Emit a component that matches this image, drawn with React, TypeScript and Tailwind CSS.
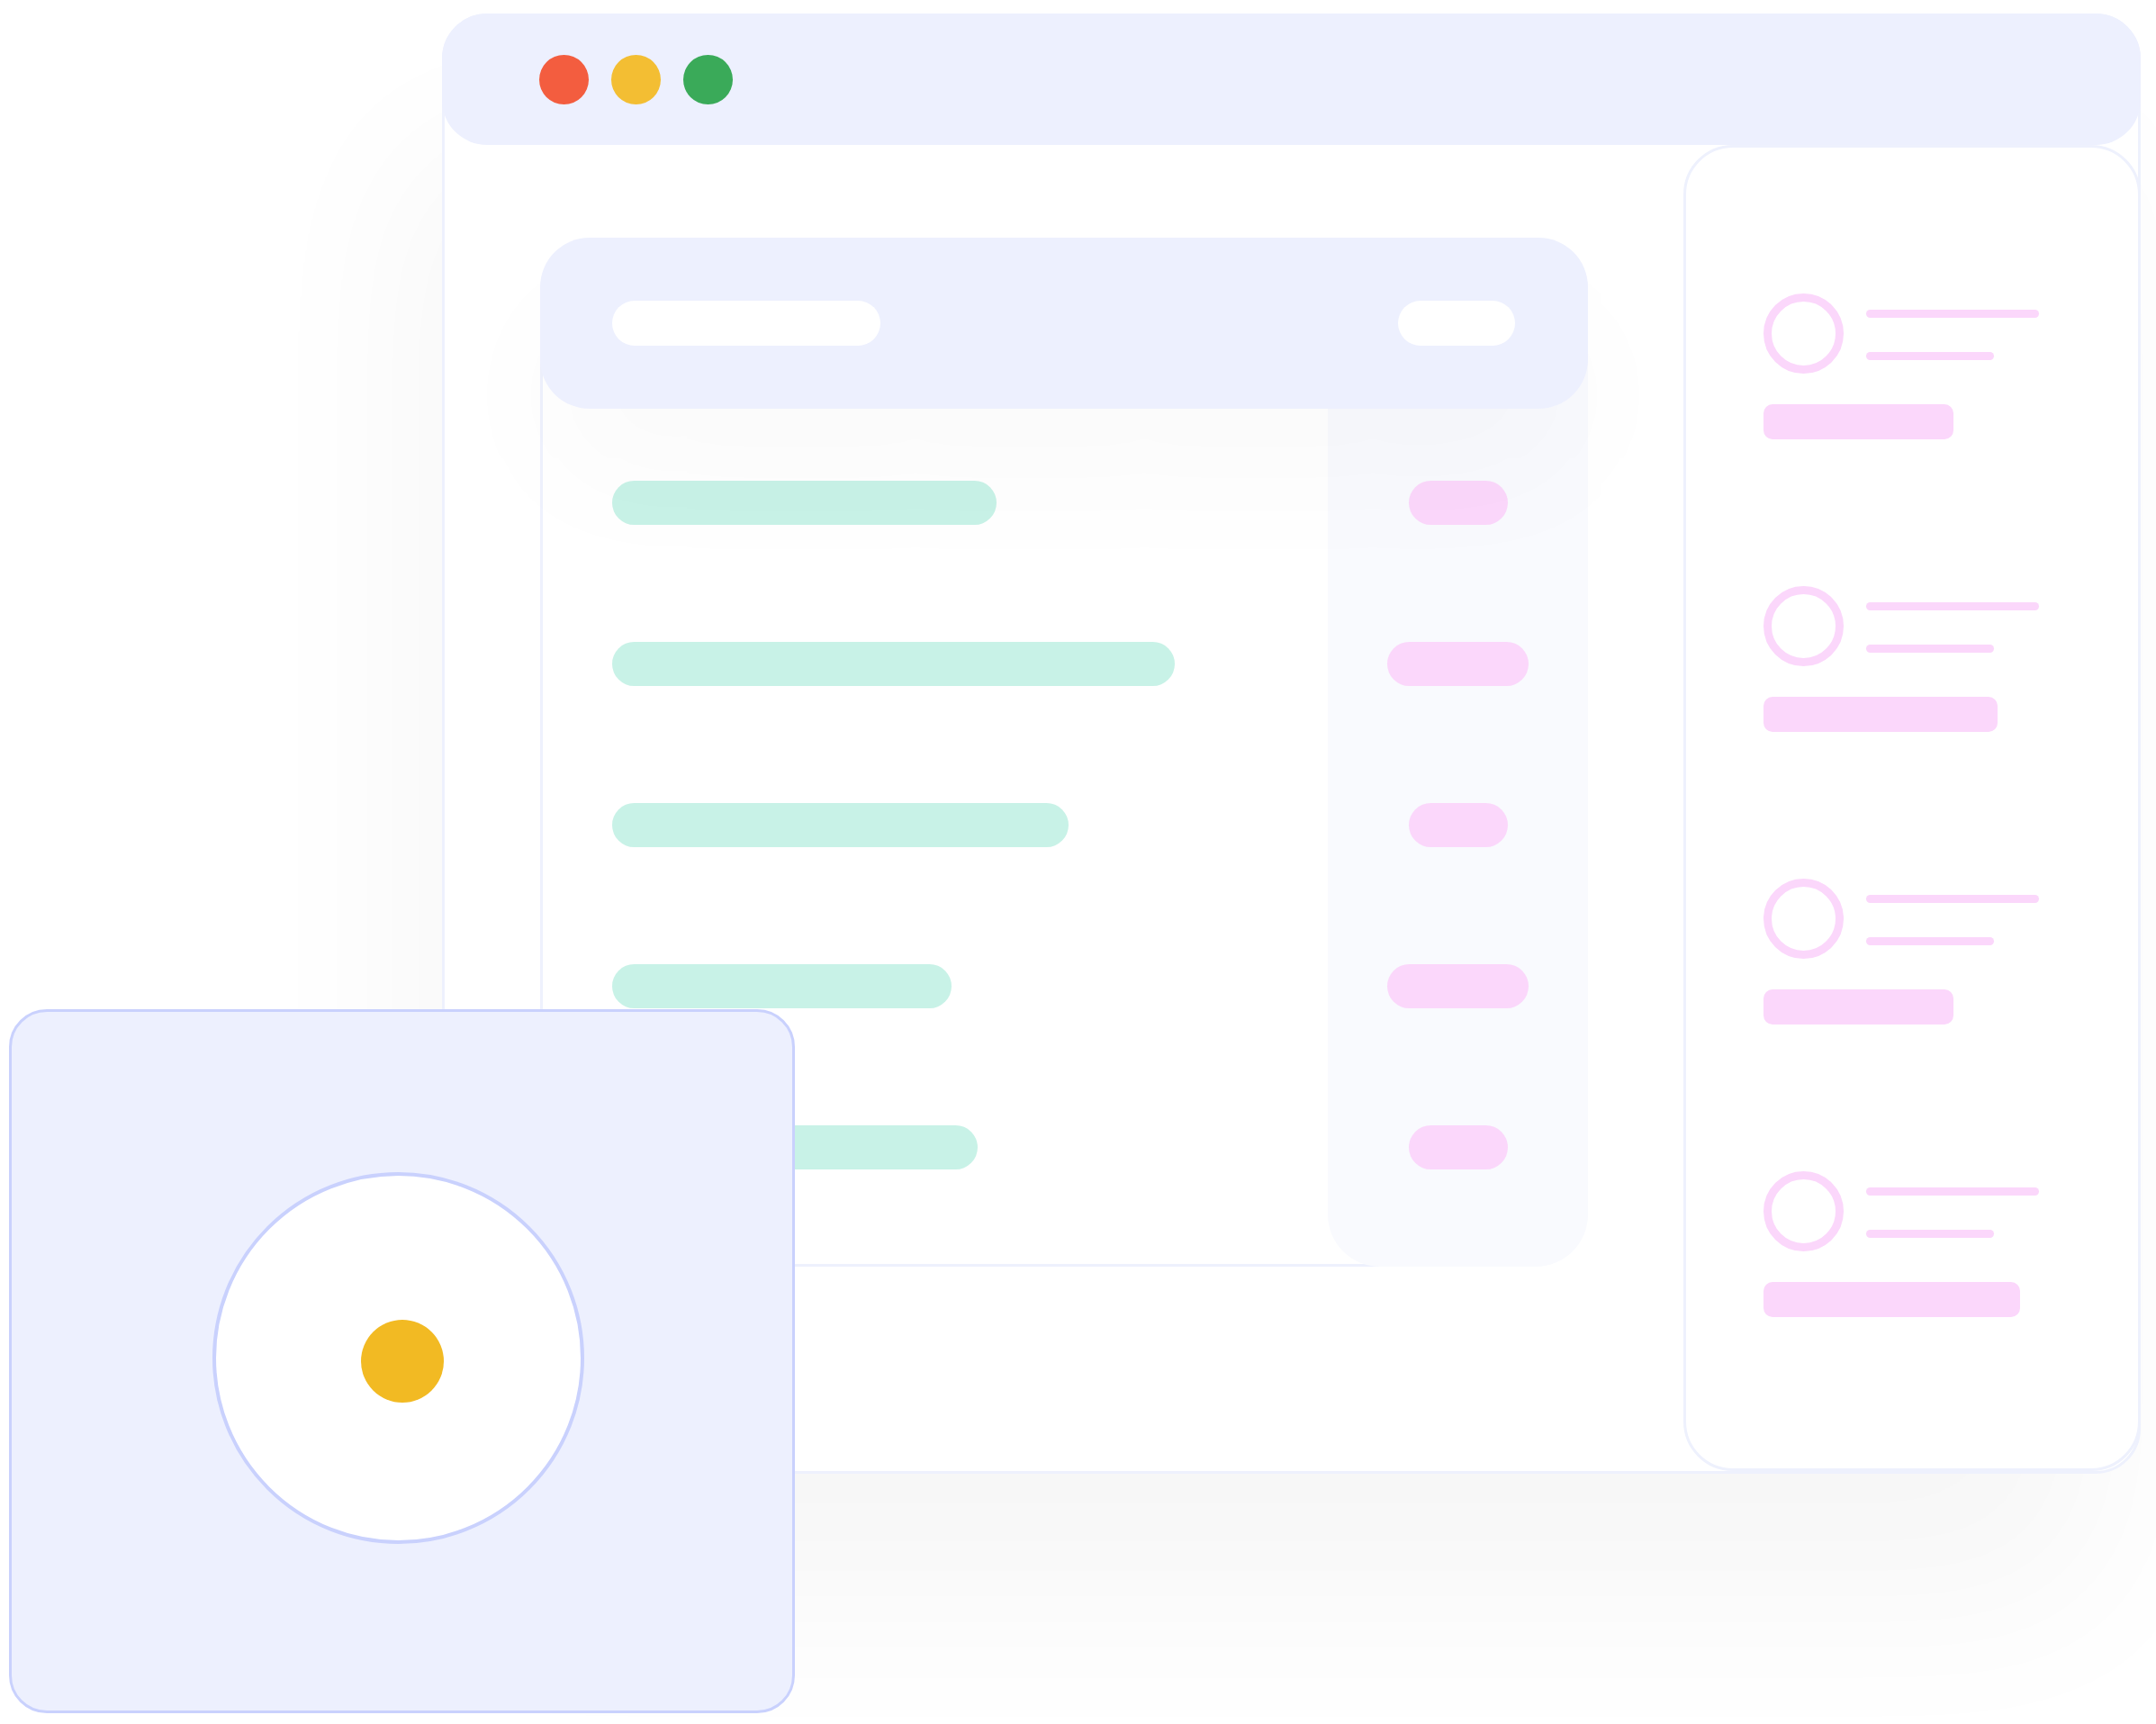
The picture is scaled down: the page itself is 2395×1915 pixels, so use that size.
import React from "react";

const greenWidths = [427, 625, 507, 377, 406];
const pinkWidths = [110, 157, 110, 157, 110];
const buttonWidths = [211, 260, 211, 285];

function SidebarItem({ btn }: { btn: number }) {
  return (
    <div className="flex flex-col">
      <div className="flex gap-[25px]">
        <div className="w-[89px] h-[89px] rounded-full border-[9px] border-[#FBD7FB] shrink-0" />
        <div className="flex flex-col pt-[18px]">
          <div className="w-[192px] h-[9px] rounded-full bg-[#FBD7FB]" />
          <div className="w-[142px] h-[9px] rounded-full bg-[#FBD7FB] mt-[38px]" />
        </div>
      </div>
      <div className="h-[39px] rounded-[10px] bg-[#FBD7FB] mt-[34px]" style={{ width: btn }} />
    </div>
  );
}

export default function App() {
  return (
    <div className="relative w-[2395px] h-[1915px] overflow-hidden bg-white pl-[491px] pt-[15px]">
      {/* Main window */}
      <div className="w-[1887px] h-[1622px] flex flex-col rounded-[50px] border-[3px] border-[#EEF1FD] bg-white shadow-[-40px_150px_200px_rgba(0,0,0,0.035)]">
        {/* Title bar */}
        <div className="-mx-[3px] -mt-[3px] h-[146px] shrink-0 rounded-[50px] bg-[#EDF0FE] flex items-center pl-[108px] gap-[25px]">
          <div className="w-[55px] h-[55px] rounded-full bg-[#F35D3F]" />
          <div className="w-[55px] h-[55px] rounded-full bg-[#F3BE33]" />
          <div className="w-[55px] h-[55px] rounded-full bg-[#3AAA59]" />
        </div>
        {/* Body */}
        <div className="flex flex-1 min-h-0">
          <div className="flex-1 pl-[106px] pt-[103px]">
            {/* Inner table card */}
            <div className="w-[1164px] h-[1143px] flex flex-col">
              <div className="relative z-10 h-[190px] shrink-0 rounded-[55px] bg-[#EDF0FE] shadow-[0_80px_160px_rgba(0,0,0,0.025)] flex items-center justify-between pl-[80px] pr-[81px]">
                <div className="w-[298px] h-[50px] rounded-full bg-white" />
                <div className="w-[130px] h-[50px] rounded-full bg-white" />
              </div>
              <div className="flex flex-1 -mt-[60px]">
                <div className="flex-1 -mr-[60px] border-l-[3px] border-b-[3px] border-[#EEF1FD] flex flex-col pt-[140px] pl-[77px] gap-[130px]">
                  {greenWidths.map((w, i) => (
                    <div key={i} className="h-[49px] rounded-full bg-[#C8F2E7]" style={{ width: w }} />
                  ))}
                </div>
                <div className="w-[289px] bg-[#F9FAFE] rounded-b-[58px] flex flex-col items-center pt-[140px] gap-[130px]">
                  {pinkWidths.map((w, i) => (
                    <div key={i} className="h-[49px] rounded-full bg-[#FBD7FB]" style={{ width: w }} />
                  ))}
                </div>
              </div>
            </div>
          </div>
          {/* Sidebar */}
          <div className="w-[508px] -mr-[3px] shrink-0 rounded-[55px] border-[3px] border-[#EEF1FD] bg-white flex flex-col pl-[86px] pt-[162px] gap-[163px]">
            {buttonWidths.map((b, i) => (
              <SidebarItem key={i} btn={b} />
            ))}
          </div>
        </div>
      </div>

      {/* Floating card bottom-left */}
      <div className="absolute left-[10px] top-[1121px] w-[873px] h-[782px] rounded-[42px] border-[3px] border-[#C9D1FD] bg-[#EDF0FE] pl-[223px] pt-[178px]">
        <div className="w-[413px] h-[413px] rounded-full border-[4px] border-[#C9D1FD] bg-white flex items-center justify-center">
          <div className="w-[92px] h-[92px] rounded-full bg-[#F2BA23] translate-x-[4px] translate-y-[3px]" />
        </div>
      </div>
    </div>
  );
}
